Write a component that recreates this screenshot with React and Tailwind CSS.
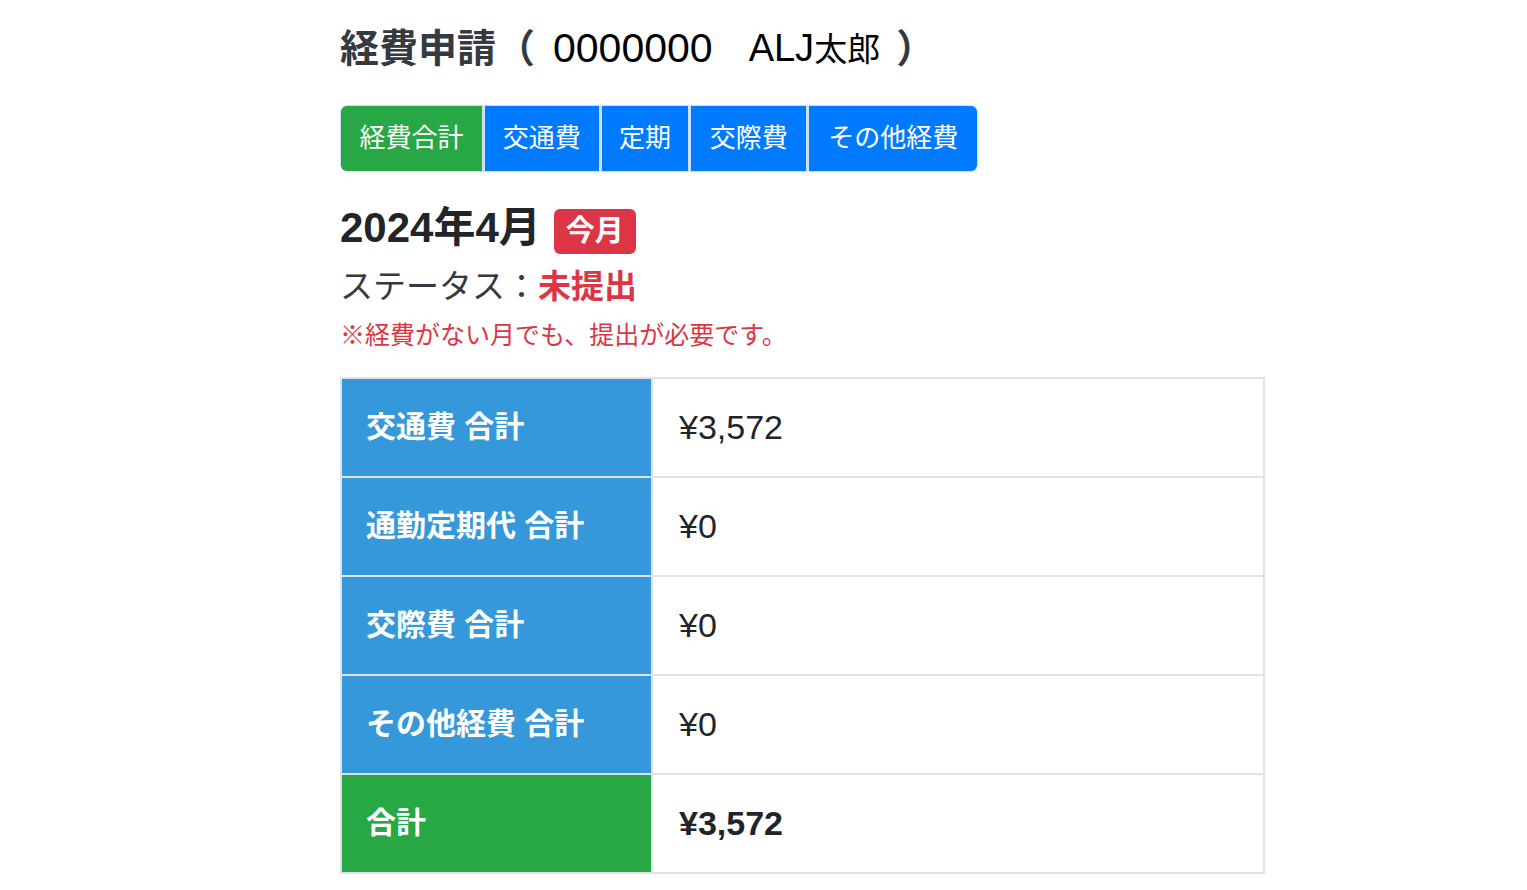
const FONT = 'font-["Liberation_Sans","Noto_Sans_CJK_JP",sans-serif]';

const TABS = [
  { label: '経費合計', active: true, w: 'w-[141px]' },
  { label: '交通費', w: 'w-[114px]' },
  { label: '定期', w: 'w-[87px]' },
  { label: '交際費', w: 'w-[115px]' },
  { label: 'その他経費', w: 'w-[168px]' },
];

const ROWS = [
  { label: '交通費 合計', value: '¥3,572' },
  { label: '通勤定期代 合計', value: '¥0' },
  { label: '交際費 合計', value: '¥0' },
  { label: 'その他経費 合計', value: '¥0' },
  { label: '合計', value: '¥3,572', total: true },
];

export default function App() {
  return (
    <div className={`min-h-[890px] bg-white ${FONT} text-[#212529]`}>
      <div className="pl-[340px] pt-[22px] w-[1264px]">
        {/* ── Title ───────────────────── */}
        <h1 className="flex items-center h-[52px] text-[39px] font-bold text-[#343a40] leading-none">
          <span>経費申請（</span>
          <span className="font-normal text-black text-[41px] ml-[18px]">0000000</span>
          <span className="font-normal text-black text-[38px] ml-[36px]">ALJ<span className="text-[33px]">太郎</span></span>
          <span className="ml-[16px]">）</span>
        </h1>

        {/* ── Tabs ────────────────────── */}
        <div className="mt-[31px] flex h-[67px] w-[638px] rounded-[7px] border border-[#cfe0f2] overflow-hidden bg-[#cfe0f2] gap-[3px]">
          {TABS.map((t) => (
            <div key={t.label}
              className={`${t.w} flex items-center justify-center text-[26px] text-white ${t.active ? 'bg-[#28a745]' : 'bg-[#007bff]'}`}>
              {t.label}
            </div>
          ))}
        </div>

        {/* ── Month ───────────────────── */}
        <div className="mt-[34px] flex items-center h-[50px]">
          <span className="text-[42px] font-bold leading-none -mt-[6px]">2024年4月</span>
          <span className="ml-[13px] h-[45px] px-[12px] rounded-[6px] bg-[#dc3545] text-white text-[29px] font-bold flex items-center leading-none">今月</span>
        </div>
        <div className="mt-[8px] h-[44px] flex items-center text-[33px] text-[#343a40] leading-none">
          <span>ステータス：</span>
          <span className="font-bold text-[#dc3545]">未提出</span>
        </div>
        <div className="mt-[10px] h-[34px] flex items-center text-[25px] text-[#dc3545] leading-none">
          ※経費がない月でも、提出が必要です。
        </div>

        {/* ── Totals table ────────────── */}
        <table className="mt-[25px] w-[925px] border-collapse border-2 border-[#dee2e6]">
          <tbody>
            {ROWS.map((r) => (
              <tr key={r.label} className="h-[99px]">
                <th className={`w-[311px] text-left pl-[24px] pb-[2px] text-[30px] font-bold text-white border-2 border-[#dee2e6] ${r.total ? 'bg-[#28a745]' : 'bg-[#3498db]'}`}>
                  {r.label}
                </th>
                <td className={`pl-[26px] text-[34px] border-2 border-[#dee2e6] ${r.total ? 'font-bold' : ''}`}>
                  {r.value}
                </td>
              </tr>
            ))}
          </tbody>
        </table>
      </div>
    </div>
  );
}
